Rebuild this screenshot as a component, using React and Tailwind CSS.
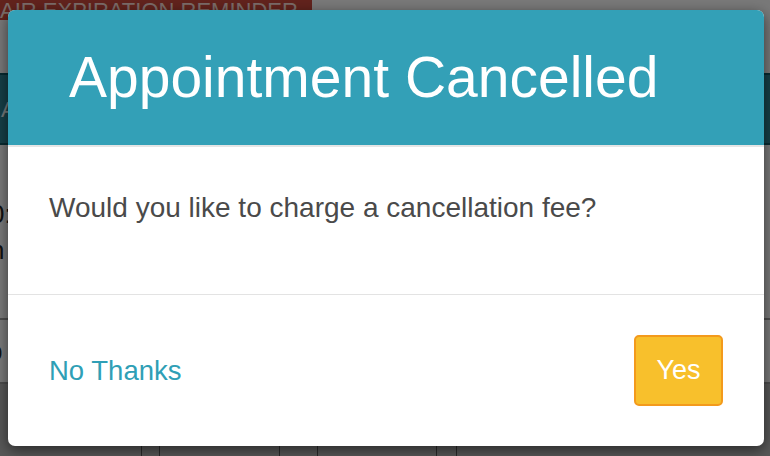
export default function App() {
  return (
    <div className="relative h-[456px] w-[770px] overflow-hidden bg-white font-['Liberation_Sans',Arial,sans-serif]">
      {/* page behind the modal */}
      <div className="flex h-full flex-col">
        <div className="flex h-[73px] items-start bg-[#f2f2f2]">
          <div className="flex h-[20px] w-[312px] items-end overflow-hidden bg-[#c4473b]">
            <span className="-mb-[2px] whitespace-nowrap text-[22px] leading-[22px] text-[#f6d8d2]">
              AIR EXPIRATION REMINDER
            </span>
          </div>
        </div>
        <div className="flex h-[72px] items-center border-y-2 border-[#0f5461] bg-[#2c7f8f] px-[1px] text-[22px] text-[#e8f3f5]">
          A
        </div>
        <div className="flex h-[173px] flex-col justify-center bg-[#f4f4f4] text-[26px] leading-[36px] text-[#222]">
          <span className="-ml-[10px]">0:</span>
          <span className="-ml-[10px]">n</span>
        </div>
        <div className="flex h-[66px] items-center border-y-2 border-[#9a9a9a] bg-[#f4f4f4] text-[26px] text-[#222]">
          <span className="-ml-[12px]">p</span>
        </div>
        <div className="flex flex-1 bg-[#b0b0b0]">
          <div className="w-[142px] border-r border-[#555]" />
          <div className="w-[18px] border-r border-[#555]" />
          <div className="w-[120px] border-r border-[#555]" />
          <div className="w-[38px] border-r border-[#555]" />
          <div className="w-[119px] border-r border-[#555]" />
          <div className="w-[20px] border-r border-[#555]" />
        </div>
      </div>

      {/* dim overlay */}
      <div className="absolute inset-0 bg-black/50" />

      {/* modal */}
      <div className="absolute left-[8px] top-[10px] flex h-[436px] w-[756px] flex-col overflow-hidden rounded-[7px] bg-white shadow-[0_4px_14px_rgba(0,0,0,0.55)]">
        <div className="flex h-[137px] shrink-0 items-center border-b-2 border-[#e5e5e5] bg-[#33a0b7] pl-[61px]">
          <h1 className="text-[57px] font-normal leading-none text-white">Appointment Cancelled</h1>
        </div>
        <div className="h-[148px] shrink-0 border-b border-[#e3e3e3] px-[41px] pt-[42px]">
          <p className="text-[28px] leading-[38px] text-[#4a4a4a]">
            Would you like to charge a cancellation fee?
          </p>
        </div>
        <div className="flex flex-1 items-center justify-between px-[41px]">
          <button className="text-[27.5px] leading-none text-[#2f9fb6]">No Thanks</button>
          <button className="flex h-[71px] w-[89px] items-center justify-center rounded-[5px] border-2 border-[#f39a1c] bg-[#f8c02c] text-[27px] leading-none text-white">
            Yes
          </button>
        </div>
      </div>
    </div>
  );
}
